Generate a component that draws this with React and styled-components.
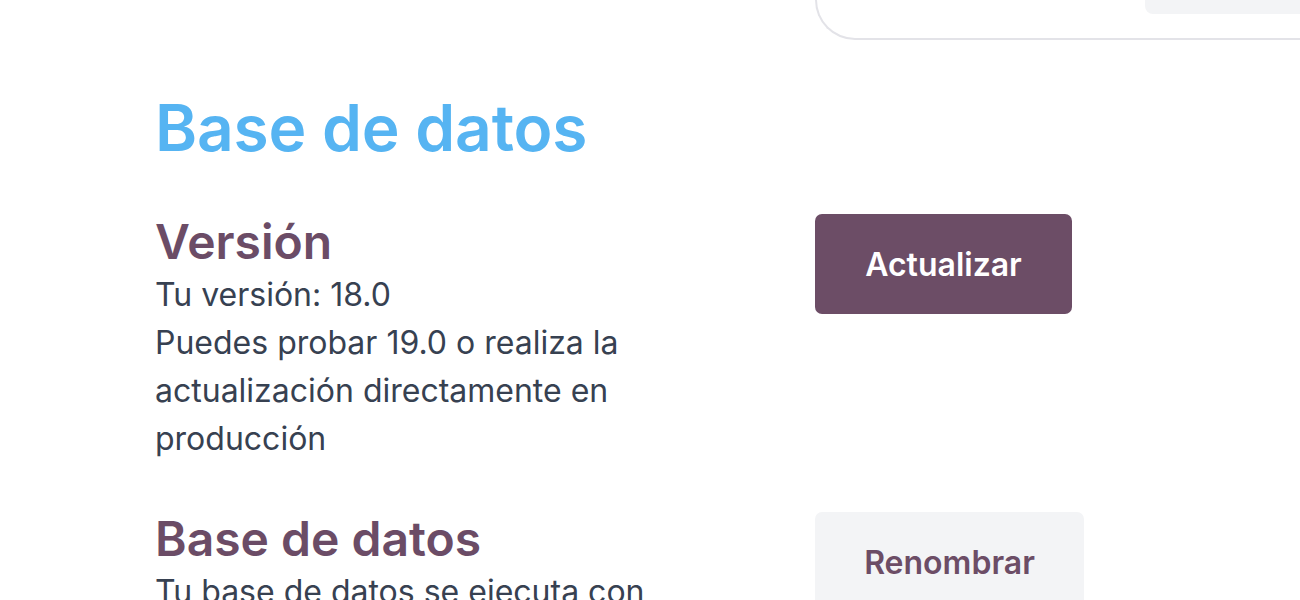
import styled, { createGlobalStyle } from "styled-components";

const GlobalStyle = createGlobalStyle`
	html, body {
		margin: 0;
		padding: 0;
		background: #ffffff;
		overflow: hidden;
		font-family: Inter, "Noto Sans", sans-serif;
	}
`;

const Page = styled.div`
	width: 1300px;
	height: 600px;
	overflow: hidden;
	display: flex;
	flex-direction: column;
`;

const TopCard = styled.div`
	flex-shrink: 0;
	margin-left: 815px;
	height: 38px;
	border: 2px solid #e3e3e8;
	border-top: none;
	border-right: none;
	border-radius: 0 0 0 40px;
	display: flex;
	justify-content: flex-end;
	align-items: flex-start;
`;

const TopBox = styled.div`
	width: 155px;
	height: 14px;
	background-color: #f3f4f6;
	border-radius: 0 0 0 8px;
`;

const Content = styled.div`
	flex-shrink: 0;
	padding-left: 155px;
	display: flex;
	flex-direction: column;
`;

const Title = styled.h1`
	margin: 56px 0 0 0;
	font-size: 64px;
	line-height: 1;
	font-weight: 600;
	color: #56b4f2;
	letter-spacing: -0.2px;
`;

const Row = styled.div`
	display: grid;
	grid-template-columns: 660px auto;
	margin-top: ${(p) => p.$top}px;
`;

const Info = styled.div`
	max-width: 500px;
`;

const Heading = styled.h2`
	margin: 0;
	font-size: 48px;
	line-height: 58px;
	font-weight: 600;
	color: #6b4c66;
`;

const Text = styled.p`
	margin: 0;
	font-size: 32px;
	line-height: 48px;
	color: #374151;
`;

const Button = styled.button`
	align-self: start;
	margin-top: ${(p) => p.$shift || 0}px;
	border: none;
	border-radius: 7px;
	width: ${(p) => p.$width}px;
	height: 100px;
	font-family: inherit;
	font-size: 32px;
	font-weight: 600;
	background-color: ${(p) => (p.$primary ? "#6c4d66" : "#f3f4f6")};
	color: ${(p) => (p.$primary ? "#ffffff" : "#6c4d66")};
`;

function App() {
	return (
		<Page>
			<GlobalStyle />
			<TopCard>
				<TopBox />
			</TopCard>
			<Content>
				<Title>Base de datos</Title>
				<Row $top={53}>
					<Info>
						<Heading>Versión</Heading>
						<Text>Tu versión: 18.0</Text>
						<Text>Puedes probar 19.0 o realiza la actualización directamente en producción</Text>
					</Info>
					<Button $primary $width={257} $shift={1}>Actualizar</Button>
				</Row>
				<Row $top={47}>
					<Info>
						<Heading>Base de datos</Heading>
						<Text>Tu base de datos se ejecuta con PostgreSQL</Text>
					</Info>
					<Button $width={269} $shift={2}>Renombrar</Button>
				</Row>
			</Content>
		</Page>
	);
}

export default App;
